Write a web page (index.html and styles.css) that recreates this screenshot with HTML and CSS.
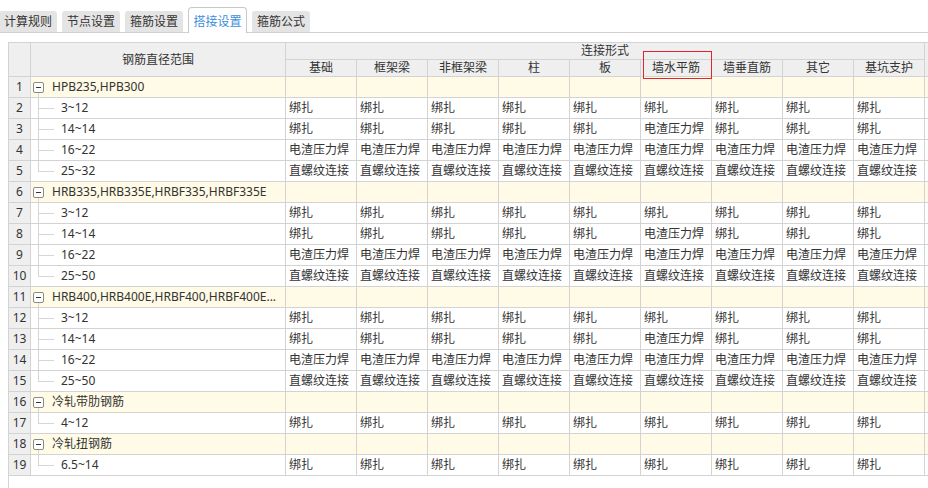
FILE: index.html
```html
<!DOCTYPE html>
<html lang="zh">
<head>
<meta charset="utf-8">
<title>搭接设置</title>
<link rel="stylesheet" href="styles.css">
</head>
<body>
<div class="tabs">
  <div class="tab">计算规则</div>
  <div class="tab">节点设置</div>
  <div class="tab">箍筋设置</div>
  <div class="tab active">搭接设置</div>
  <div class="tab">箍筋公式</div>
</div>
<div class="grid-wrap">
<table class="grid">
  <colgroup>
    <col class="c-num"><col class="c-tree">
    <col class="c-val"><col class="c-val"><col class="c-val"><col class="c-val"><col class="c-val"><col class="c-val"><col class="c-val"><col class="c-val"><col class="c-val">
    <col class="c-fill">
  </colgroup>
  <thead>
    <tr class="h1">
      <th rowspan="2" class="num"></th>
      <th rowspan="2">钢筋直径范围</th>
      <th colspan="9">连接形式</th>
      <th rowspan="2" class="fill"></th>
    </tr>
    <tr class="h2">
      <th>基础</th><th>框架梁</th><th>非框架梁</th><th>柱</th><th>板</th><th class="marked">墙水平筋<span class="mark"></span></th><th>墙垂直筋</th><th>其它</th><th>基坑支护</th>
    </tr>
  </thead>
  <tbody>
    <tr class="group"><td class="num">1</td><td class="tree"><div class="node"><span class="toggle"></span><span class="label">HPB235,HPB300</span></div></td><td></td><td></td><td></td><td></td><td></td><td></td><td></td><td></td><td></td><td></td></tr>
    <tr><td class="num">2</td><td class="tree"><div class="leaf"><span class="guide"></span><span class="label">3~12</span></div></td><td>绑扎</td><td>绑扎</td><td>绑扎</td><td>绑扎</td><td>绑扎</td><td>绑扎</td><td>绑扎</td><td>绑扎</td><td>绑扎</td><td></td></tr>
    <tr><td class="num">3</td><td class="tree"><div class="leaf"><span class="guide"></span><span class="label">14~14</span></div></td><td>绑扎</td><td>绑扎</td><td>绑扎</td><td>绑扎</td><td>绑扎</td><td>电渣压力焊</td><td>绑扎</td><td>绑扎</td><td>绑扎</td><td></td></tr>
    <tr><td class="num">4</td><td class="tree"><div class="leaf"><span class="guide"></span><span class="label">16~22</span></div></td><td>电渣压力焊</td><td>电渣压力焊</td><td>电渣压力焊</td><td>电渣压力焊</td><td>电渣压力焊</td><td>电渣压力焊</td><td>电渣压力焊</td><td>电渣压力焊</td><td>电渣压力焊</td><td></td></tr>
    <tr><td class="num">5</td><td class="tree"><div class="leaf last"><span class="guide"></span><span class="label">25~32</span></div></td><td>直螺纹连接</td><td>直螺纹连接</td><td>直螺纹连接</td><td>直螺纹连接</td><td>直螺纹连接</td><td>直螺纹连接</td><td>直螺纹连接</td><td>直螺纹连接</td><td>直螺纹连接</td><td></td></tr>

    <tr class="group"><td class="num">6</td><td class="tree"><div class="node"><span class="toggle"></span><span class="label">HRB335,HRB335E,HRBF335,HRBF335E</span></div></td><td></td><td></td><td></td><td></td><td></td><td></td><td></td><td></td><td></td><td></td></tr>
    <tr><td class="num">7</td><td class="tree"><div class="leaf"><span class="guide"></span><span class="label">3~12</span></div></td><td>绑扎</td><td>绑扎</td><td>绑扎</td><td>绑扎</td><td>绑扎</td><td>绑扎</td><td>绑扎</td><td>绑扎</td><td>绑扎</td><td></td></tr>
    <tr><td class="num">8</td><td class="tree"><div class="leaf"><span class="guide"></span><span class="label">14~14</span></div></td><td>绑扎</td><td>绑扎</td><td>绑扎</td><td>绑扎</td><td>绑扎</td><td>电渣压力焊</td><td>绑扎</td><td>绑扎</td><td>绑扎</td><td></td></tr>
    <tr><td class="num">9</td><td class="tree"><div class="leaf"><span class="guide"></span><span class="label">16~22</span></div></td><td>电渣压力焊</td><td>电渣压力焊</td><td>电渣压力焊</td><td>电渣压力焊</td><td>电渣压力焊</td><td>电渣压力焊</td><td>电渣压力焊</td><td>电渣压力焊</td><td>电渣压力焊</td><td></td></tr>
    <tr><td class="num">10</td><td class="tree"><div class="leaf last"><span class="guide"></span><span class="label">25~50</span></div></td><td>直螺纹连接</td><td>直螺纹连接</td><td>直螺纹连接</td><td>直螺纹连接</td><td>直螺纹连接</td><td>直螺纹连接</td><td>直螺纹连接</td><td>直螺纹连接</td><td>直螺纹连接</td><td></td></tr>

    <tr class="group"><td class="num">11</td><td class="tree"><div class="node"><span class="toggle"></span><span class="label">HRB400,HRB400E,HRBF400,HRBF400E...</span></div></td><td></td><td></td><td></td><td></td><td></td><td></td><td></td><td></td><td></td><td></td></tr>
    <tr><td class="num">12</td><td class="tree"><div class="leaf"><span class="guide"></span><span class="label">3~12</span></div></td><td>绑扎</td><td>绑扎</td><td>绑扎</td><td>绑扎</td><td>绑扎</td><td>绑扎</td><td>绑扎</td><td>绑扎</td><td>绑扎</td><td></td></tr>
    <tr><td class="num">13</td><td class="tree"><div class="leaf"><span class="guide"></span><span class="label">14~14</span></div></td><td>绑扎</td><td>绑扎</td><td>绑扎</td><td>绑扎</td><td>绑扎</td><td>电渣压力焊</td><td>绑扎</td><td>绑扎</td><td>绑扎</td><td></td></tr>
    <tr><td class="num">14</td><td class="tree"><div class="leaf"><span class="guide"></span><span class="label">16~22</span></div></td><td>电渣压力焊</td><td>电渣压力焊</td><td>电渣压力焊</td><td>电渣压力焊</td><td>电渣压力焊</td><td>电渣压力焊</td><td>电渣压力焊</td><td>电渣压力焊</td><td>电渣压力焊</td><td></td></tr>
    <tr><td class="num">15</td><td class="tree"><div class="leaf last"><span class="guide"></span><span class="label">25~50</span></div></td><td>直螺纹连接</td><td>直螺纹连接</td><td>直螺纹连接</td><td>直螺纹连接</td><td>直螺纹连接</td><td>直螺纹连接</td><td>直螺纹连接</td><td>直螺纹连接</td><td>直螺纹连接</td><td></td></tr>

    <tr class="group"><td class="num">16</td><td class="tree"><div class="node"><span class="toggle"></span><span class="label">冷轧带肋钢筋</span></div></td><td></td><td></td><td></td><td></td><td></td><td></td><td></td><td></td><td></td><td></td></tr>
    <tr><td class="num">17</td><td class="tree"><div class="leaf last"><span class="guide"></span><span class="label">4~12</span></div></td><td>绑扎</td><td>绑扎</td><td>绑扎</td><td>绑扎</td><td>绑扎</td><td>绑扎</td><td>绑扎</td><td>绑扎</td><td>绑扎</td><td></td></tr>

    <tr class="group"><td class="num">18</td><td class="tree"><div class="node"><span class="toggle"></span><span class="label">冷轧扭钢筋</span></div></td><td></td><td></td><td></td><td></td><td></td><td></td><td></td><td></td><td></td><td></td></tr>
    <tr><td class="num">19</td><td class="tree"><div class="leaf last"><span class="guide"></span><span class="label">6.5~14</span></div></td><td>绑扎</td><td>绑扎</td><td>绑扎</td><td>绑扎</td><td>绑扎</td><td>绑扎</td><td>绑扎</td><td>绑扎</td><td>绑扎</td><td></td></tr>
  </tbody>
</table>
</div>
</body>
</html>
```

FILE: styles.css
```css
* { box-sizing: border-box; }
html, body {
  margin: 0;
  padding: 0;
  background: #fff;
  overflow: hidden;
}
body {
  width: 928px;
  height: 488px;
  font-family: "Noto Sans", "Noto Sans CJK SC", sans-serif;
  font-size: 12px;
  color: #333;
}

/* tabs */
.tabs {
  display: flex;
  align-items: flex-end;
  gap: 5px;
  height: 33px;
  margin-left: -1px;
  border-bottom: 1px solid #d0d0d0;
}
.tab {
  width: 58px;
  height: 21px;
  line-height: 21px;
  text-align: center;
  background: #e4e4e4;
  border-radius: 3px 3px 0 0;
  color: #333;
  font-size: 12px;
  white-space: nowrap;
}
.tab.active {
  height: 26px;
  line-height: 27px;
  width: 59px;
  background: #fff;
  border: 1px solid #c8c8c8;
  border-bottom: none;
  border-radius: 4px 4px 0 0;
  margin-bottom: -1px;
  color: #3c8de0;
}

/* grid */
.grid-wrap {
  margin: 9px 0 0 8px;
  height: 446px;
  border-left: 1px solid #d3d3d3;
  overflow: hidden;
}
.grid {
  border-collapse: separate;
  border-spacing: 0;
  table-layout: fixed;
  width: 930px;
  border-top: 1px solid #d3d3d3;
}
.c-num { width: 22px; }
.c-tree { width: 255px; }
.c-val { width: 71px; }
.c-fill { width: 14px; }

.grid th, .grid td {
  border-right: 1px solid #d3d3d3;
  border-bottom: 1px solid #d3d3d3;
  padding: 0;
  white-space: nowrap;
  overflow: hidden;
}
.grid th {
  background: #efefef;
  font-weight: normal;
  line-height: 16px;
  text-align: center;
}
.grid td {
  line-height: 20px;
  height: 21px;
  padding: 0 3px;
}
.grid td.num {
  background: #efefef;
  text-align: center;
  padding: 0;
}
.grid tr.group td { background: #fffbe6; }
.grid tr.group td.num { background: #efefef; }
.grid td.tree { padding: 0; }

/* red highlight on header */
.grid th.marked { position: relative; overflow: visible; }
.mark {
  position: absolute;
  left: 2px;
  top: -9px;
  width: 69px;
  height: 28px;
  border: 1px solid #e0262a;
  z-index: 2;
}

/* tree */
.node, .leaf {
  display: flex;
  align-items: center;
  height: 20px;
}
.node .toggle {
  position: relative;
  width: 11px;
  height: 11px;
  margin-left: 2px;
  border: 1px solid #8a8a8a;
  border-radius: 2px;
  background: #fff;
  flex: none;
}
.node .toggle::before {
  content: "";
  position: absolute;
  left: 2px;
  top: 4px;
  width: 5px;
  height: 1px;
  background: #333;
}
.node .toggle::after {
  content: "";
  position: absolute;
  left: 4px;
  top: 10px;
  width: 1px;
  height: 6px;
  background: #d6d6d6;
}
.node .label { margin-left: 8px; }
.leaf .guide {
  width: 16px;
  height: 21px;
  margin-left: 7px;
  align-self: flex-start;
  flex: none;
  background:
    linear-gradient(#d6d6d6, #d6d6d6) 0 0 / 1px 100% no-repeat,
    linear-gradient(#d6d6d6, #d6d6d6) 1px 10px / 15px 1px no-repeat;
}
.leaf.last .guide {
  background:
    linear-gradient(#d6d6d6, #d6d6d6) 0 0 / 1px 11px no-repeat,
    linear-gradient(#d6d6d6, #d6d6d6) 1px 10px / 15px 1px no-repeat;
}
.leaf .label { margin-left: 7px; }
```
